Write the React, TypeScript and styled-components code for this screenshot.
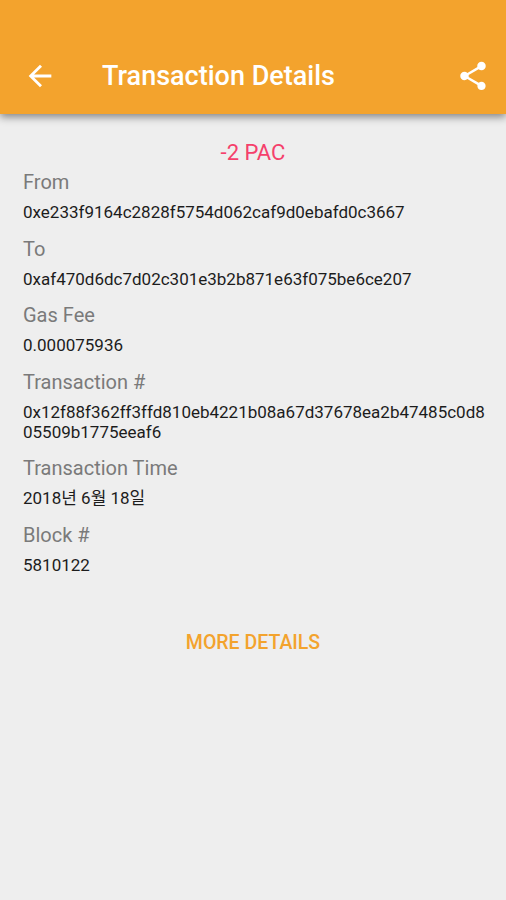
import React from "react";
import styled, { createGlobalStyle } from "styled-components";

const GlobalStyle = createGlobalStyle`
  * { box-sizing: border-box; }
  body {
    margin: 0;
    background: #eeeeee;
    font-family: Roboto, "Noto Sans CJK KR", sans-serif;
  }
`;

const Screen = styled.div`
  min-height: 900px;
  width: 506px;
  background: #eeeeee;
  overflow: hidden;
`;

const AppBar = styled.header`
  display: flex;
  align-items: center;
  height: 114px;
  padding: 37px 16px 0 23px;
  background: #f3a32d;
  box-shadow: 0 3px 8px rgba(0, 0, 0, 0.45);
  color: #ffffff;
`;

const IconButton = styled.button`
  display: flex;
  padding: 0;
  border: 0;
  background: none;
  color: inherit;
`;

const Title = styled.h1`
  flex: 1;
  margin: 1px 0 0 45px;
  font-size: 27px;
  line-height: 32px;
  font-weight: 500;
  white-space: nowrap;
`;

const Content = styled.main`
  display: flex;
  flex-direction: column;
  padding: 26px 23px 0;
`;

const Amount = styled.div`
  text-align: center;
  font-size: 22px;
  line-height: 26px;
  color: #f5406b;
`;

const Details = styled.dl`
  margin: 3px 0 0;
`;

const Field = styled.div`
  padding-bottom: 13.5px;
`;

const Label = styled.dt`
  font-size: 20px;
  line-height: 26px;
  color: #7a7a7a;
`;

const Value = styled.dd`
  margin: 7px 0 0;
  font-size: 17px;
  line-height: 20px;
  color: #1c1c1c;
`;

const Line = styled.span`
  display: block;
  white-space: nowrap;
`;

const MoreButton = styled.button`
  align-self: center;
  margin-top: 43px;
  padding: 0;
  border: 0;
  background: none;
  font: 500 19.5px/24px Roboto, sans-serif;
  color: #f3a32d;
`;

const fields = [
  { label: "From", lines: ["0xe233f9164c2828f5754d062caf9d0ebafd0c3667"] },
  { label: "To", lines: ["0xaf470d6dc7d02c301e3b2b871e63f075be6ce207"] },
  { label: "Gas Fee", lines: ["0.000075936"] },
  {
    label: "Transaction #",
    lines: [
      "0x12f88f362ff3ffd810eb4221b08a67d37678ea2b47485c0d8",
      "05509b1775eeaf6",
    ],
  },
  { label: "Transaction Time", lines: ["2018년 6월 18일"] },
  { label: "Block #", lines: ["5810122"] },
];

export default function App() {
  return (
    <Screen>
      <GlobalStyle />
      <AppBar>
        <IconButton aria-label="Back">
          <svg width="34" height="34" viewBox="0 0 24 24" fill="currentColor">
            <path d="M20 11H7.83l5.59-5.59L12 4l-8 8 8 8 1.41-1.41L7.83 13H20v-2z" />
          </svg>
        </IconButton>
        <Title>Transaction Details</Title>
        <IconButton aria-label="Share">
          <svg width="34" height="34" viewBox="0 0 24 24" fill="currentColor">
            <path d="M18 16.08c-.76 0-1.44.3-1.96.77L8.91 12.7c.05-.23.09-.46.09-.7s-.04-.47-.09-.7l7.05-4.11c.54.5 1.25.81 2.04.81 1.66 0 3-1.34 3-3s-1.34-3-3-3-3 1.34-3 3c0 .24.04.47.09.7L8.04 9.81C7.5 9.31 6.79 9 6 9c-1.66 0-3 1.34-3 3s1.34 3 3 3c.79 0 1.5-.31 2.04-.81l7.12 4.16c-.05.21-.08.43-.08.65 0 1.61 1.31 2.92 2.92 2.92s2.92-1.31 2.92-2.92-1.31-2.92-2.92-2.92z" />
          </svg>
        </IconButton>
      </AppBar>
      <Content>
        <Amount>-2 PAC</Amount>
        <Details>
          {fields.map(({ label, lines }) => (
            <Field key={label}>
              <Label>{label}</Label>
              <Value>
                {lines.map((line) => (
                  <Line key={line}>{line}</Line>
                ))}
              </Value>
            </Field>
          ))}
        </Details>
        <MoreButton>MORE DETAILS</MoreButton>
      </Content>
    </Screen>
  );
}
